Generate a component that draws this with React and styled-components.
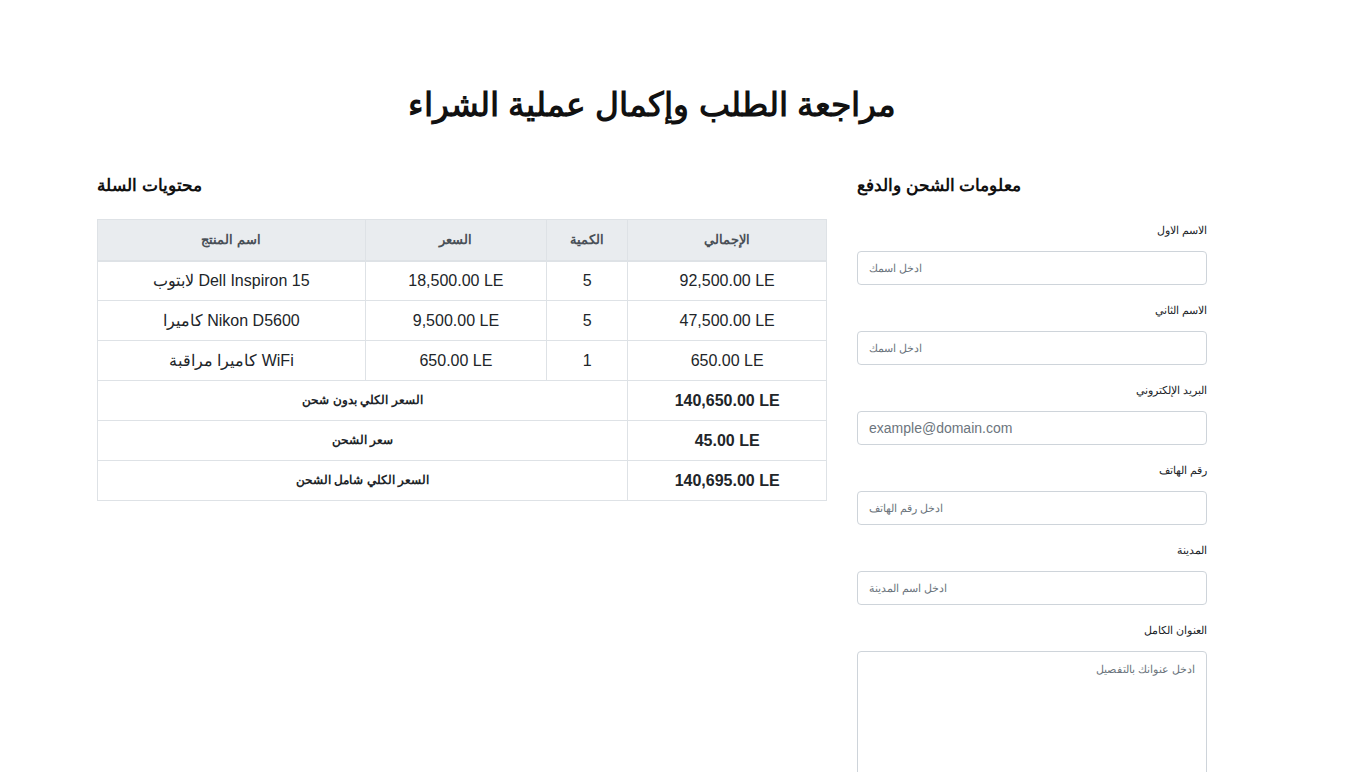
import React from "react";
import styled, { createGlobalStyle } from "styled-components";

const Global = createGlobalStyle`
  * { box-sizing: border-box; }
  body {
    margin: 0;
    background: #fff;
    color: #212529;
    font-family: "Liberation Sans", Arial, sans-serif;
    font-size: 16px;
    line-height: 1.5;
  }
`;

const Page = styled.div`
  width: 1110px;
  margin-left: 97px;
  padding-top: 81px;
`;

const Title = styled.h1`
  margin: 0 0 44px;
  text-align: center;
  font-size: 33px;
  line-height: 48px;
  font-weight: 700;
  color: #111;
`;

const Row = styled.div`
  display: grid;
  grid-template-columns: 730px 350px;
  column-gap: 30px;
  align-items: start;
`;

const Column = styled.section`
  display: flex;
  flex-direction: column;
`;

const SectionTitle = styled.h4`
  margin: 0 0 ${(p) => p.$gap}px;
  font-size: 16.5px;
  line-height: 24px;
  font-weight: 700;
  color: #111;
`;

const Table = styled.table`
  width: 100%;
  border-collapse: collapse;
  border: 1px solid #dee2e6;
`;

const Th = styled.th`
  background: #e9ecef;
  border: 1px solid #dee2e6;
  border-bottom-width: 2px;
  padding: 7px 8px;
  height: 41px;
  font-size: 12.8px;
  font-weight: 700;
  color: #495057;
  text-align: center;
  width: ${(p) => p.$w}px;
`;

const Td = styled.td`
  border: 1px solid #dee2e6;
  padding: 7px 8px;
  height: 40px;
  text-align: center;
  font-size: ${(p) => (p.$label ? 12.4 : 16)}px;
  font-weight: ${(p) => (p.$bold ? 700 : 400)};
  color: #212529;
`;

const Field = styled.div`
  display: flex;
  flex-direction: column;
  margin-bottom: 16px;
`;

const Label = styled.label`
  display: block;
  text-align: right;
  font-size: 11px;
  line-height: 18px;
  margin-bottom: 12px;
  color: #212529;
`;

const Input = styled.input`
  width: 100%;
  height: 34px;
  padding: 4px 11px;
  border: 1px solid #ced4da;
  border-radius: 4px;
  font-family: inherit;
  font-size: ${(p) => (p.$latin ? 14 : 11)}px;
  color: #495057;
  background: #fff;
  &::placeholder { color: #6c757d; opacity: 1; }
`;

const TextArea = styled.textarea`
  width: 100%;
  height: 150px;
  padding: 8px 11px;
  border: 1px solid #ced4da;
  border-radius: 4px;
  font-family: inherit;
  font-size: 11px;
  line-height: 18px;
  text-align: right;
  resize: vertical;
  color: #495057;
  &::placeholder { color: #6c757d; opacity: 1; }
`;

const items = [
  { name: "لابتوب Dell Inspiron 15", price: "18,500.00 LE", qty: 5, total: "92,500.00 LE" },
  { name: "كاميرا Nikon D5600", price: "9,500.00 LE", qty: 5, total: "47,500.00 LE" },
  { name: "كاميرا مراقبة WiFi", price: "650.00 LE", qty: 1, total: "650.00 LE" },
];

const totals = [
  { label: "السعر الكلي بدون شحن", value: "140,650.00 LE" },
  { label: "سعر الشحن", value: "45.00 LE" },
  { label: "السعر الكلي شامل الشحن", value: "140,695.00 LE" },
];

const fields = [
  { label: "الاسم الاول", placeholder: "ادخل اسمك", type: "text" },
  { label: "الاسم الثاني", placeholder: "ادخل اسمك", type: "text" },
  { label: "البريد الإلكتروني", placeholder: "example@domain.com", type: "email", latin: true },
  { label: "رقم الهاتف", placeholder: "ادخل رقم الهاتف", type: "tel" },
  { label: "المدينة", placeholder: "ادخل اسم المدينة", type: "text" },
];

export default function App() {
  return (
    <>
      <Global />
      <Page>
        <Title>مراجعة الطلب وإكمال عملية الشراء</Title>
        <Row>
          <Column>
            <SectionTitle $gap={22}>محتويات السلة</SectionTitle>
            <Table>
              <thead>
                <tr>
                  <Th $w={268}>اسم المنتج</Th>
                  <Th $w={182}>السعر</Th>
                  <Th $w={81}>الكمية</Th>
                  <Th $w={199}>الإجمالي</Th>
                </tr>
              </thead>
              <tbody>
                {items.map((it) => (
                  <tr key={it.name}>
                    <Td>{it.name}</Td>
                    <Td>{it.price}</Td>
                    <Td>{it.qty}</Td>
                    <Td>{it.total}</Td>
                  </tr>
                ))}
                {totals.map((t) => (
                  <tr key={t.label}>
                    <Td colSpan={3} $bold $label>{t.label}</Td>
                    <Td $bold>{t.value}</Td>
                  </tr>
                ))}
              </tbody>
            </Table>
          </Column>
          <Column>
            <SectionTitle $gap={24}>معلومات الشحن والدفع</SectionTitle>
            {fields.map((f) => (
              <Field key={f.label}>
                <Label>{f.label}</Label>
                <Input type={f.type} placeholder={f.placeholder} $latin={f.latin} />
              </Field>
            ))}
            <Field>
              <Label>العنوان الكامل</Label>
              <TextArea placeholder="ادخل عنوانك بالتفصيل" />
            </Field>
          </Column>
        </Row>
      </Page>
    </>
  );
}
